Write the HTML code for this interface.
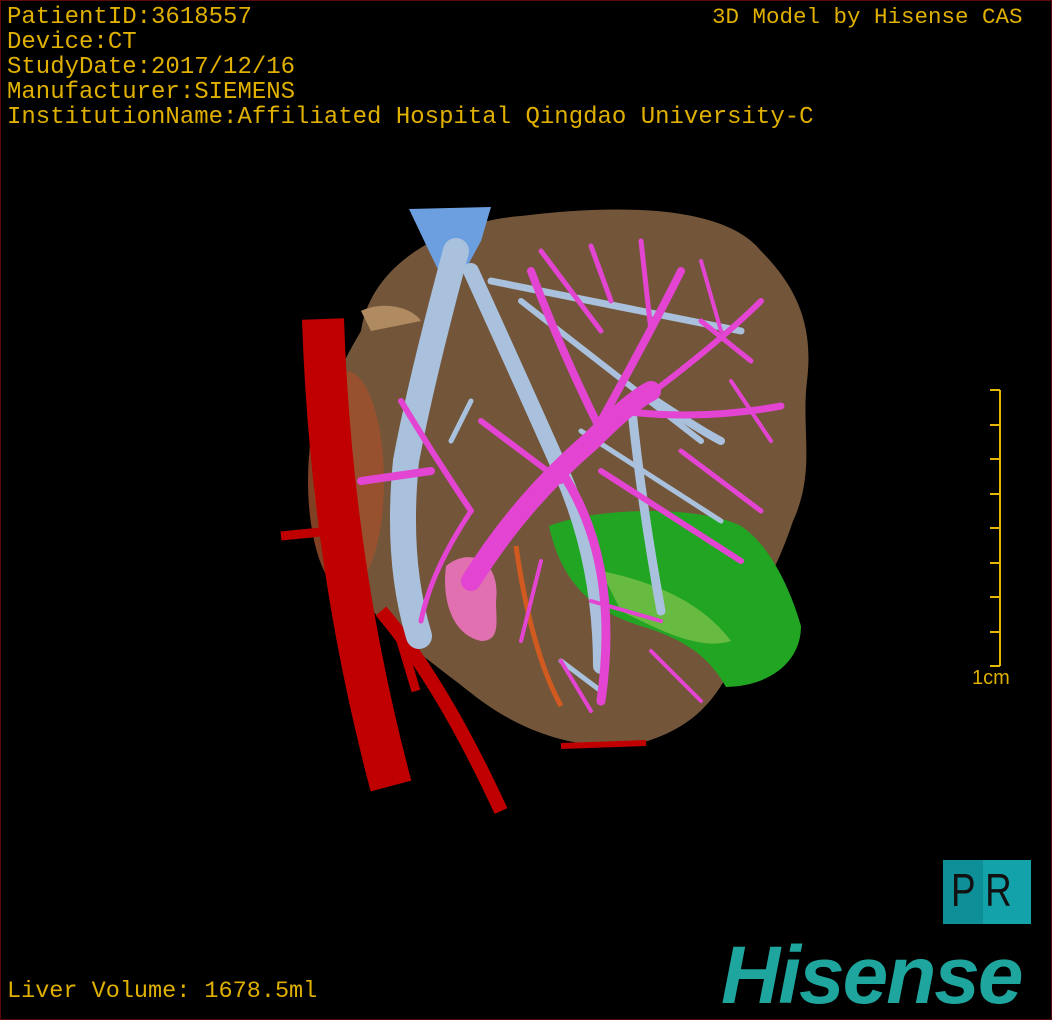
<!DOCTYPE html>
<html><head><meta charset="utf-8"><style>
html,body{margin:0;padding:0;background:#000}
#f{position:relative;width:1050px;height:1018px;border:1px solid #5a0a0a;background:#000;overflow:hidden}
.t{position:absolute;font-family:"Liberation Mono",monospace;color:#e0b000;white-space:pre;line-height:25px}
</style></head><body><div id="f">
<svg width="1050" height="1018" style="position:absolute;left:0;top:0">
<path d="M360,330 C370,260 450,220 520,215 C600,205 720,200 760,250 C800,290 812,330 806,380 C800,430 815,470 792,520 C772,580 752,600 742,640 C722,690 700,725 640,742 C580,752 520,732 470,692 C420,652 338,600 318,520 C300,450 330,380 360,330 Z" fill="#73563a"/>
<path d="M360,310 C380,300 410,305 420,320 L370,330 Z" fill="#b08a60"/>
<ellipse cx="345" cy="480" rx="38" ry="110" fill="#a0502c" opacity="0.8"/>
<path d="M548,525 C600,505 700,505 740,525 C770,545 790,590 800,625 C800,660 770,685 725,686 C710,660 690,640 640,625 C590,610 560,580 548,525 Z" fill="#22a522"/>
<path d="M600,570 C650,580 700,600 730,640 C700,650 660,630 620,610 Z" fill="#7ac04a" opacity="0.8"/>
<path d="M322,318 Q330,560 390,785" stroke="#c00000" stroke-width="42" fill="none"/>
<path d="M380,610 Q440,680 500,810" stroke="#c00000" stroke-width="14" fill="none"/>
<path d="M280,535 L330,530" stroke="#c00000" stroke-width="9" fill="none"/>
<path d="M400,640 L415,690" stroke="#c00000" stroke-width="9" fill="none"/>
<path d="M560,745 L645,742" stroke="#c00000" stroke-width="6" fill="none"/>
<path d="M515,545 Q530,650 560,705" stroke="#d05a20" stroke-width="5" fill="none"/>
<path d="M445,565 C470,545 500,560 495,600 C495,620 500,640 480,640 C455,635 440,605 445,565 Z" fill="#e070b0"/>
<path d="M408,208 L490,206 L480,240 L450,295 L428,250 Z" fill="#6c9fe0"/>
<g stroke="#a9c1dd" fill="none" stroke-linecap="round">
<path d="M455,250 Q420,380 405,460 Q395,560 418,635" stroke-width="26"/>
<path d="M470,270 Q520,380 560,470 Q600,560 600,665" stroke-width="16"/>
<path d="M490,280 L740,330" stroke-width="7"/>
<path d="M520,300 L700,440" stroke-width="6"/>
<path d="M640,390 Q700,430 720,440" stroke-width="8"/>
<path d="M630,400 Q640,500 660,610" stroke-width="9"/>
<path d="M580,430 L720,520" stroke-width="5"/>
<path d="M560,660 L600,690" stroke-width="5"/>
<path d="M450,440 L470,400" stroke-width="5"/>
</g>
<g stroke="#e344d2" fill="none" stroke-linecap="round">
<path d="M470,580 Q520,500 590,440 Q630,400 650,390" stroke-width="20"/>
<path d="M600,430 Q560,350 530,270" stroke-width="8"/>
<path d="M600,420 Q650,330 680,270" stroke-width="8"/>
<path d="M620,410 Q700,420 780,405" stroke-width="7"/>
<path d="M640,400 Q720,340 760,300" stroke-width="6"/>
<path d="M560,470 Q620,560 600,700" stroke-width="9"/>
<path d="M600,470 L740,560" stroke-width="6"/>
<path d="M430,470 L360,480" stroke-width="8"/>
<path d="M470,510 Q430,450 400,400" stroke-width="6"/>
<path d="M470,510 Q430,570 420,620" stroke-width="5"/>
<path d="M560,480 L480,420" stroke-width="6"/>
<path d="M540,250 L600,330" stroke-width="5"/>
<path d="M590,245 L610,300" stroke-width="5"/>
<path d="M640,240 L650,330" stroke-width="5"/>
<path d="M700,320 L750,360" stroke-width="5"/>
<path d="M680,450 L760,510" stroke-width="5"/>
<path d="M590,600 L660,620" stroke-width="4"/>
<path d="M540,560 L520,640" stroke-width="4"/>
<path d="M700,260 L720,330" stroke-width="4"/>
<path d="M730,380 L770,440" stroke-width="4"/>
<path d="M650,650 L700,700" stroke-width="4"/>
<path d="M560,660 L590,710" stroke-width="4"/>
</g>
<g stroke="#e8b800" stroke-width="2">
<line x1="999" y1="389" x2="999" y2="665"/>
<line x1="989" y1="389" x2="999" y2="389"/><line x1="989" y1="424" x2="999" y2="424"/>
<line x1="989" y1="458" x2="999" y2="458"/><line x1="989" y1="493" x2="999" y2="493"/>
<line x1="989" y1="527" x2="999" y2="527"/><line x1="989" y1="562" x2="999" y2="562"/>
<line x1="989" y1="596" x2="999" y2="596"/><line x1="989" y1="631" x2="999" y2="631"/>
<line x1="989" y1="665" x2="999" y2="665"/>
</g>
<rect x="942" y="859" width="88" height="64" fill="#13a2aa"/>
<rect x="942" y="859" width="40" height="64" fill="#0e8f98"/>
</svg>
<div class="t" style="left:6px;top:4px;font-size:24px">PatientID:3618557
Device:CT
StudyDate:2017/12/16
Manufacturer:SIEMENS
InstitutionName:Affiliated Hospital Qingdao University-C</div>
<div class="t" style="left:711px;top:4px;font-size:22.5px">3D Model by Hisense CAS</div>
<div class="t" style="left:971px;top:665px;font-size:20px;font-family:'Liberation Sans',sans-serif">1cm</div>
<div class="t" style="left:6px;top:978px;font-size:23.5px">Liver Volume: 1678.5ml</div>
<div style="position:absolute;left:950px;top:862px;font:46px 'Liberation Sans',sans-serif;color:#111;letter-spacing:12px;transform:scaleX(0.8);transform-origin:left">PR</div>
<div style="position:absolute;left:720px;top:928px;font:italic bold 82px 'Liberation Sans',sans-serif;color:#1ea69e;letter-spacing:-2px;transform:scaleX(1.0);transform-origin:left">Hisense</div>
</div></body></html>
